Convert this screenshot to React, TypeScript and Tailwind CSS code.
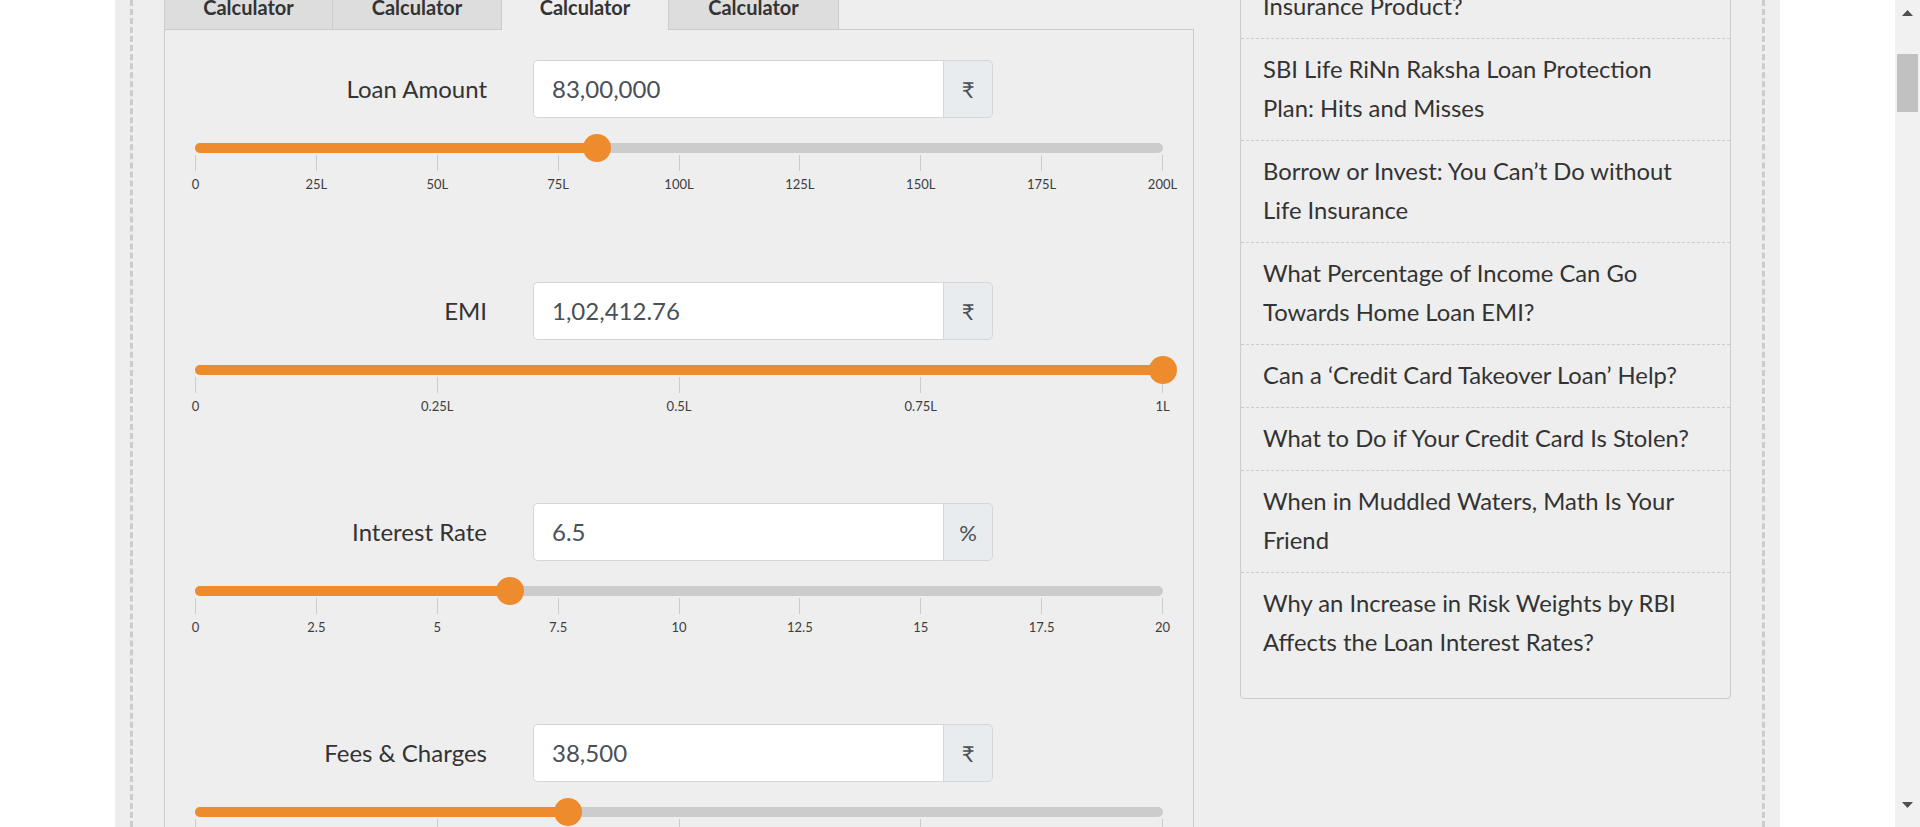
import React from "react";

type SliderProps = {
  pct: number;
  ticks: string[];
};

function Slider({ pct, ticks }: SliderProps) {
  return (
    <div className="mt-[25px]">
      <div className="relative h-[10px] rounded-full bg-[#cccccc]">
        <div
          className="absolute inset-y-0 left-0 rounded-full bg-[#ed8b2d]"
          style={{ width: `${pct}%` }}
        />
        <div
          className="absolute top-1/2 h-[28px] w-[28px] -translate-x-1/2 -translate-y-1/2 rounded-full bg-[#ed8b2d]"
          style={{ left: `${pct}%` }}
        />
      </div>
      <div className="flex justify-between">
        {ticks.map((t, i) => (
          <div key={i} className="flex w-px flex-col items-center">
            <div className="mt-[2px] h-[16px] w-px bg-[#cccccc]" />
            <span className="mt-[5px] whitespace-nowrap text-[13px] leading-[16px] text-[#3d3d3d]">
              {t}
            </span>
          </div>
        ))}
      </div>
    </div>
  );
}

type RowProps = {
  label: string;
  value: string;
  unit: string;
  pct: number;
  ticks: string[];
  first?: boolean;
};

function Row({ label, value, unit, pct, ticks, first }: RowProps) {
  return (
    <div className={first ? "h-[222px]" : "h-[221px]"}>
      <div className="flex h-[58px] items-center">
        <div className="w-[292px] text-right text-[24px] text-[#333333]">{label}</div>
        <div className="ml-[46px] flex h-[58px] w-[460px]">
          <div className="flex flex-1 items-center rounded-l-[5px] border border-r-0 border-[#d3d7db] bg-white pl-[18px] text-[24px] text-[#495057]">
            {value}
          </div>
          <div className="flex w-[50px] items-center justify-center rounded-r-[5px] border border-[#d3d7db] bg-[#e9ecef] text-[22px] text-[#495057]">
            {unit}
          </div>
        </div>
      </div>
      <Slider pct={pct} ticks={ticks} />
    </div>
  );
}

const tabs = [
  { w: "w-[168px]", active: false, last: false },
  { w: "w-[169px]", active: false, last: false },
  { w: "w-[167px]", active: true, last: false },
  { w: "w-[171px]", active: false, last: true },
];

const articles: React.ReactNode[] = [
  <>
    Loan Protection: Is It a Good
    <br />
    Insurance Product?
  </>,
  "SBI Life RiNn Raksha Loan Protection Plan: Hits and Misses",
  "Borrow or Invest: You Can’t Do without Life Insurance",
  "What Percentage of Income Can Go Towards Home Loan EMI?",
  "Can a ‘Credit Card Takeover Loan’ Help?",
  "What to Do if Your Credit Card Is Stolen?",
  "When in Muddled Waters, Math Is Your Friend",
  "Why an Increase in Risk Weights by RBI Affects the Loan Interest Rates?",
];

function Scrollbar() {
  return (
    <div className="flex h-full w-[25px] flex-col bg-[#f1f1f1]">
      <div className="flex h-[25px] items-center justify-center">
        <svg width="11" height="6" viewBox="0 0 11 6">
          <polygon points="5.5,0 11,6 0,6" fill="#505050" />
        </svg>
      </div>
      <div className="flex-1">
        <div className="mx-[2px] mt-[29px] h-[58px] bg-[#c1c1c1]" />
      </div>
      <div className="flex h-[28px] items-start justify-center pt-[3px]">
        <svg width="11" height="6" viewBox="0 0 11 6">
          <polygon points="0,0 11,0 5.5,6" fill="#505050" />
        </svg>
      </div>
    </div>
  );
}

export default function App() {
  return (
    <div className="flex h-[827px] w-full overflow-hidden bg-white font-[Lato,sans-serif]">
      <div className="flex h-full flex-1 justify-center">
        <div className="h-full w-[1665px] bg-[#eeeeee] px-[15px]">
          <div className="h-full overflow-hidden border-x-[3px] border-dashed border-[#cccccc]">
            <div className="-mt-[80px] flex px-[31px]">
              {/* Left column */}
              <div className="w-[1030px] pt-[59px]">
                <div className="flex h-[50px]">
                  {tabs.map((t, i) => (
                    <div
                      key={i}
                      className={
                        t.active
                          ? `relative z-10 flex h-[51px] ${t.w} justify-center border-l border-t border-[#cccccc] bg-[#eeeeee] pt-[15px] text-[20px] font-bold leading-[24px] text-[#333333]`
                          : t.last
                          ? `flex h-[50px] ${t.w} justify-center border-x border-t border-[#cccccc] bg-[#dddddd] pt-[15px] text-[20px] font-bold leading-[24px] text-[#333333]`
                          : `flex h-[50px] ${t.w} justify-center border-l border-t border-[#cccccc] bg-[#dddddd] pt-[15px] text-[20px] font-bold leading-[24px] text-[#333333]`
                      }
                    >
                      Calculator
                    </div>
                  ))}
                </div>
                <div className="border border-[#cccccc] px-[30px] pt-[30px]">
                  <Row
                    first
                    label="Loan Amount"
                    value="83,00,000"
                    unit="₹"
                    pct={41.5}
                    ticks={["0", "25L", "50L", "75L", "100L", "125L", "150L", "175L", "200L"]}
                  />
                  <Row
                    label="EMI"
                    value="1,02,412.76"
                    unit="₹"
                    pct={100}
                    ticks={["0", "0.25L", "0.5L", "0.75L", "1L"]}
                  />
                  <Row
                    label="Interest Rate"
                    value="6.5"
                    unit="%"
                    pct={32.5}
                    ticks={["0", "2.5", "5", "7.5", "10", "12.5", "15", "17.5", "20"]}
                  />
                  <Row
                    label="Fees & Charges"
                    value="38,500"
                    unit="₹"
                    pct={38.5}
                    ticks={["0", "0.25L", "0.5L", "0.75L", "1L"]}
                  />
                </div>
              </div>
              {/* Sidebar */}
              <div className="ml-[46px] mt-[16px] w-[491px] self-start rounded-[4px] border border-[#cccccc] pb-[24px]">
                {articles.map((a, i) => (
                  <div
                    key={i}
                    className={
                      i === articles.length - 1
                        ? "pb-[12px] pl-[22px] pr-[33px] pt-[11px] text-[23.8px] leading-[39px] text-[#333333]"
                        : "border-b border-dashed border-[#cccccc] pb-[12px] pl-[22px] pr-[33px] pt-[11px] text-[23.8px] leading-[39px] text-[#333333]"
                    }
                  >
                    {a}
                  </div>
                ))}
              </div>
            </div>
          </div>
        </div>
      </div>
      <Scrollbar />
    </div>
  );
}
